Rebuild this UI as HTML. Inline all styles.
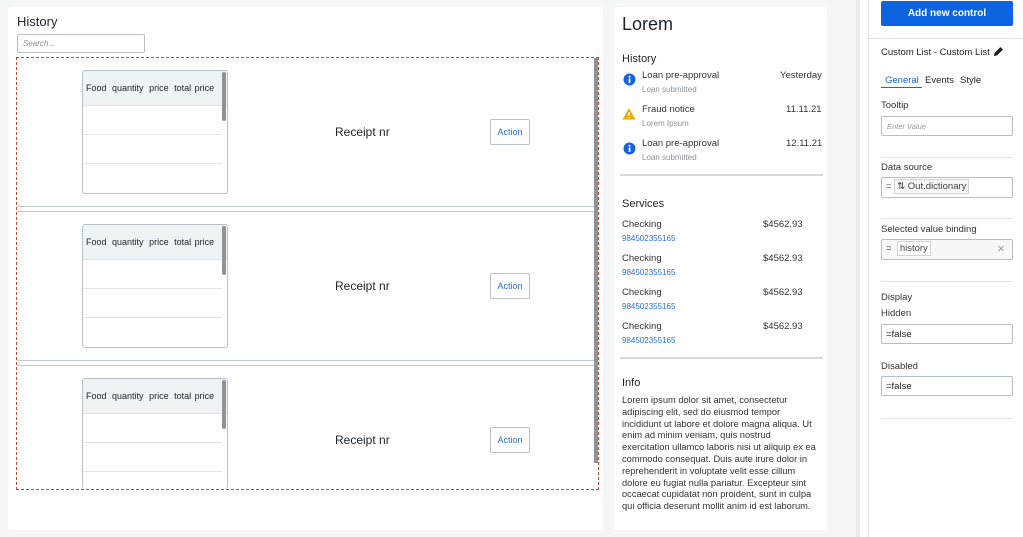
<!DOCTYPE html>
<html><head><meta charset="utf-8"><style>
*{box-sizing:border-box;margin:0;padding:0}
body{width:1023px;height:537px;overflow:hidden;background:#f3f7f8;font-family:"Liberation Sans",sans-serif;color:#1d2329;position:relative}
.a{position:absolute}
.card{background:#fff;border-radius:3px}
.tbl{border:1px solid #b9c1c8;border-radius:3px;background:#fff;overflow:hidden}
.th{height:35px;background:#eef3f6;border-bottom:1px solid #e0e5e8;font-size:9px;line-height:35px;padding-left:3px;white-space:nowrap;word-spacing:1px}
.th span{margin-right:2px}
.row{height:29px;border-bottom:1px solid #e3e6e8;margin-right:5px}
.btn{border:1px solid #b9c1c8;border-radius:2px;color:#2b6fd8;font-size:9px;text-align:center;background:#fff}
.sm{font-size:9.5px;color:#333}
.sub{font-size:8px;color:#8a9199}
.lnk{font-size:8px;color:#2b6fd8}
.inp{border:1px solid #b7bec5;border-radius:2px;background:#fff;font-size:9.5px}
.lbl{font-size:9.5px;color:#333}
.hr{height:1px;background:#dfe3e6}
</style></head><body>
<div class="a card" style="left:8px;top:7px;width:595px;height:523px"></div>
<div class="a" style="left:17px;top:14px;font-size:13px">History</div>
<div class="a inp" style="left:17px;top:34px;width:128px;height:19px;padding:4px 5px;font-style:italic;color:#8a9199;font-size:8px">Search...</div>
<div class="a" style="left:16px;top:57px;width:583px;height:433px;border:1px dashed #c9452c;overflow:hidden">
  <div class="a" style="left:0;top:0;width:577px;height:149px;border-bottom:1px solid #c3cacf"></div>
  <div class="a" style="left:0;top:153px;width:577px;height:150px;border-top:1px solid #c3cacf;border-bottom:1px solid #c3cacf"></div>
  <div class="a" style="left:0;top:307px;width:577px;height:130px;border-top:1px solid #c3cacf"></div>
  <div class="a" style="left:577px;top:0;width:4px;height:405px;background:#8e9399"></div>
</div>

<div class="a tbl" style="left:82px;top:70px;width:146px;height:124px"><div class="th"><span>Food</span> <span>quantity</span> <span>price</span> total&nbsp;price</div><div class="row"></div><div class="row"></div><div class="a" style="right:1px;top:1px;width:4px;height:49px;background:#8e9399;border-radius:2px"></div></div>
<div class="a" style="left:335px;top:125px;font-size:12px">Receipt nr</div>
<div class="a btn" style="left:490px;top:119px;width:40px;height:26px;line-height:24px">Action</div>

<div class="a tbl" style="left:82px;top:224px;width:146px;height:124px"><div class="th"><span>Food</span> <span>quantity</span> <span>price</span> total&nbsp;price</div><div class="row"></div><div class="row"></div><div class="a" style="right:1px;top:1px;width:4px;height:49px;background:#8e9399;border-radius:2px"></div></div>
<div class="a" style="left:335px;top:279px;font-size:12px">Receipt nr</div>
<div class="a btn" style="left:490px;top:273px;width:40px;height:26px;line-height:24px">Action</div>

<div class="a tbl" style="left:82px;top:378px;width:146px;height:111px;border-bottom:none"><div class="th"><span>Food</span> <span>quantity</span> <span>price</span> total&nbsp;price</div><div class="row"></div><div class="row"></div><div class="a" style="right:1px;top:1px;width:4px;height:49px;background:#8e9399;border-radius:2px"></div></div>
<div class="a" style="left:335px;top:433px;font-size:12px">Receipt nr</div>
<div class="a btn" style="left:490px;top:427px;width:40px;height:26px;line-height:24px">Action</div>

<div class="a card" style="left:614px;top:7px;width:213px;height:523px"></div>
<div class="a" style="left:622px;top:14px;font-size:18px">Lorem</div>
<div class="a" style="left:622px;top:53px;font-size:11px">History</div>
<svg class="a" style="left:623px;top:73px" width="13" height="13"><circle cx="6.5" cy="6.5" r="6" fill="#1a64d8"/><rect x="5.7" y="5.5" width="1.7" height="4.5" fill="#fff"/><circle cx="6.5" cy="3.8" r="1" fill="#fff"/></svg>
<div class="a sm" style="left:642px;top:70px">Loan pre-approval</div><div class="a sub" style="left:642px;top:85px">Loan submitted</div><div class="a sm" style="left:780px;top:70px">Yesterday</div>
<svg class="a" style="left:622px;top:107px" width="14" height="13"><path d="M7 1 L13.5 12.5 H0.5 Z" fill="#f5a800"/><rect x="6.3" y="5" width="1.4" height="4" fill="#fff"/><rect x="6.3" y="10" width="1.4" height="1.3" fill="#fff"/></svg>
<div class="a sm" style="left:642px;top:104px">Fraud notice</div><div class="a sub" style="left:642px;top:119px">Lorem Ipsum</div><div class="a sm" style="left:786px;top:104px">11.11.21</div>
<svg class="a" style="left:623px;top:142px" width="13" height="13"><circle cx="6.5" cy="6.5" r="6" fill="#1a64d8"/><rect x="5.7" y="5.5" width="1.7" height="4.5" fill="#fff"/><circle cx="6.5" cy="3.8" r="1" fill="#fff"/></svg>
<div class="a sm" style="left:642px;top:138px">Loan pre-approval</div><div class="a sub" style="left:642px;top:153px">Loan submitted</div><div class="a sm" style="left:786px;top:138px">12.11.21</div>
<div class="a" style="left:620px;top:174px;width:203px;height:2px;background:#d3d9dd"></div>
<div class="a" style="left:622px;top:198px;font-size:11px">Services</div>
<div class="a sm" style="left:622px;top:219px">Checking</div><div class="a lnk" style="left:622px;top:234px">984502355165</div><div class="a sm" style="left:763px;top:219px">$4562.93</div>
<div class="a sm" style="left:622px;top:253px">Checking</div><div class="a lnk" style="left:622px;top:268px">984502355165</div><div class="a sm" style="left:763px;top:253px">$4562.93</div>
<div class="a sm" style="left:622px;top:287px">Checking</div><div class="a lnk" style="left:622px;top:302px">984502355165</div><div class="a sm" style="left:763px;top:287px">$4562.93</div>
<div class="a sm" style="left:622px;top:321px">Checking</div><div class="a lnk" style="left:622px;top:336px">984502355165</div><div class="a sm" style="left:763px;top:321px">$4562.93</div>
<div class="a" style="left:620px;top:357px;width:203px;height:2px;background:#d3d9dd"></div>
<div class="a" style="left:622px;top:377px;font-size:11px">Info</div>
<div class="a" style="left:622px;top:395px;width:196px;font-size:9.3px;line-height:11.8px;color:#333">Lorem ipsum dolor sit amet, consectetur adipiscing elit, sed do eiusmod tempor incididunt ut labore et dolore magna aliqua. Ut enim ad minim veniam, quis nostrud exercitation ullamco laboris nisi ut aliquip ex ea commodo consequat. Duis aute irure dolor in reprehenderit in voluptate velit esse cillum dolore eu fugiat nulla pariatur. Excepteur sint occaecat cupidatat non proident, sunt in culpa qui officia deserunt mollit anim id est laborum.</div>

<div class="a" style="left:856px;top:0;width:4px;height:537px;background:#e8ecee"></div>
<div class="a" style="left:860px;top:0;width:163px;height:537px;background:#fff"></div>
<div class="a" style="left:868px;top:0;width:1px;height:537px;background:#e3e7ea"></div>
<div class="a" style="left:881px;top:1px;width:132px;height:25px;background:#0c64e0;border-radius:2px;color:#fff;font-size:10px;font-weight:bold;text-align:center;line-height:25px">Add new control</div>
<div class="a" style="left:869px;top:38px;width:154px;height:1px;background:#dfe3e6"></div>
<div class="a" style="left:881px;top:47px;font-size:9.5px;color:#222">Custom List - Custom List</div>
<svg class="a" style="left:993px;top:46px" width="11" height="11"><path d="M1 10 L1.5 7 L7.5 1 L10 3.5 L4 9.5 Z" fill="#222"/></svg>
<div class="a" style="left:885px;top:75px;font-size:9.5px;color:#1a64d8">General</div>
<div class="a" style="left:881px;top:87px;width:41px;height:1px;background:#1a64d8"></div>
<div class="a" style="left:925px;top:75px;font-size:9.5px">Events</div>
<div class="a" style="left:960px;top:75px;font-size:9.5px">Style</div>
<div class="a lbl" style="left:881px;top:100px">Tooltip</div>
<div class="a inp" style="left:881px;top:116px;width:132px;height:20px;padding:5px 5px;font-size:7.5px;font-style:italic;color:#999">Enter Value</div>
<div class="a hr" style="left:881px;top:157px;width:132px"></div>
<div class="a lbl" style="left:881px;top:162px">Data source</div>
<div class="a inp" style="left:881px;top:177px;width:132px;height:21px;padding:3px 4px;color:#444">= <span style="border:1px solid #d0d5d9;background:#f5f7f8;padding:1px 2px">⇅ Out.dictionary</span></div>
<div class="a hr" style="left:881px;top:218px;width:132px"></div>
<div class="a lbl" style="left:881px;top:224px">Selected value binding</div>
<div class="a inp" style="left:881px;top:239px;width:132px;height:21px;padding:3px 4px;color:#444;background:#f5f7f8">= &nbsp;<span style="border:1px solid #d0d5d9;background:#fff;padding:1px 2px">history</span><span style="position:absolute;right:7px;top:4px;color:#999">✕</span></div>
<div class="a hr" style="left:881px;top:281px;width:132px"></div>
<div class="a lbl" style="left:881px;top:292px">Display</div>
<div class="a lbl" style="left:881px;top:308px">Hidden</div>
<div class="a inp" style="left:881px;top:324px;width:132px;height:20px;padding:4px 4px;color:#222">=false</div>
<div class="a lbl" style="left:881px;top:361px">Disabled</div>
<div class="a inp" style="left:881px;top:376px;width:132px;height:20px;padding:4px 4px;color:#222">=false</div>
<div class="a hr" style="left:881px;top:418px;width:132px"></div>
</body></html>
